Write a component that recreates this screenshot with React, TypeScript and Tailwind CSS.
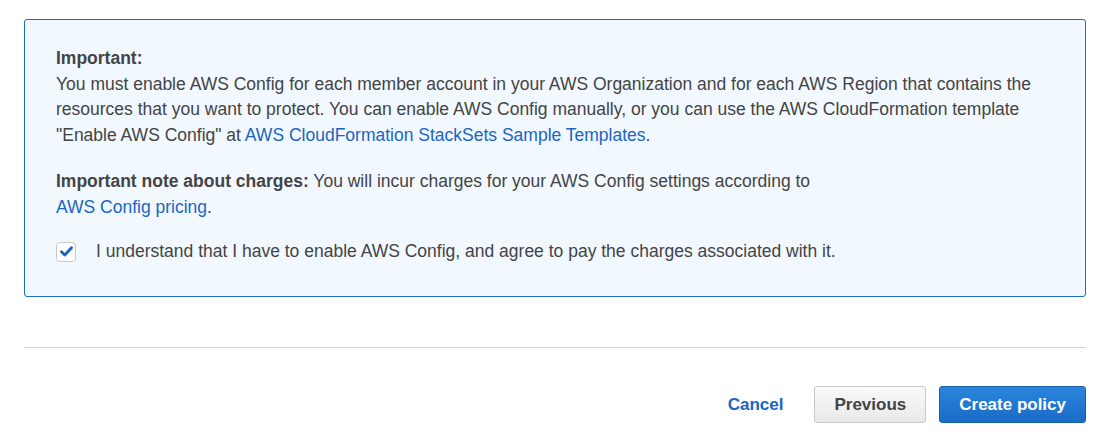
import { useState } from 'react'

export default function App() {
  const [agreed, setAgreed] = useState(true)

  return (
    <div
      className="w-[1098px] h-[436px] bg-white text-[#444] text-[17.5px]"
      style={{ fontFamily: '"Liberation Sans", Arial, sans-serif' }}
    >
      <div className="pt-[19px] pl-[24px] pr-[12px]">
        {/* Info box */}
        <div className="h-[278px] border border-[#1a6fbf] rounded-[3px] bg-[#f1f8ff] pl-[31px] pr-[20px] pt-[26px] leading-[25.5px]">
          <p className="font-bold">Important:</p>
          <p>
            You must enable AWS Config for each member account in your AWS Organization and for each AWS Region that contains the
            resources that you want to protect. You can enable AWS Config manually, or you can use the AWS CloudFormation template
            "Enable AWS Config" at{' '}
            <a href="#" className="text-[#1a66c2]">
              AWS CloudFormation StackSets Sample Templates
            </a>
            .
          </p>

          <p className="mt-[21px] w-[775px]">
            <span className="font-bold">Important note about charges:</span> You will incur charges for your AWS Config
            settings according to{' '}
            <a href="#" className="text-[#1a66c2]">
              AWS Config pricing
            </a>
            .
          </p>

          <label className="mt-[19px] flex items-center gap-[20px] cursor-pointer">
            <button
              type="button"
              onClick={() => setAgreed(!agreed)}
              className="w-[20px] h-[20px] rounded-[4px] border border-[#c8c8c8] bg-white flex items-center justify-center"
            >
              {agreed && (
                <svg width="13" height="11" viewBox="0 0 13 11">
                  <path d="M1.5 5.8 L4.8 9 L11.5 1.8" fill="none" stroke="#1666c0" strokeWidth="2.8" strokeLinecap="round" strokeLinejoin="round" />
                </svg>
              )}
            </button>
            <span>I understand that I have to enable AWS Config, and agree to pay the charges associated with it.</span>
          </label>
        </div>

        {/* Divider */}
        <div className="mt-[50px] border-t border-[#d5d5d5]" />

        {/* Footer actions */}
        <div className="mt-[38px] flex items-center justify-end text-[17px]">
          <a href="#" className="font-bold text-[#1a66c2] mr-[31px]">
            Cancel
          </a>
          <button className="h-[37px] px-[19px] rounded-[3px] border border-[#c9c9c9] bg-gradient-to-b from-[#f9f9f9] to-[#e9e9e9] font-bold text-[#444] mr-[13px]">
            Previous
          </button>
          <button className="h-[37px] px-[19px] rounded-[3px] border border-[#1a5fa8] bg-gradient-to-b from-[#2b84dd] to-[#1a6cc6] font-bold text-white">
            Create policy
          </button>
        </div>
      </div>
    </div>
  )
}
